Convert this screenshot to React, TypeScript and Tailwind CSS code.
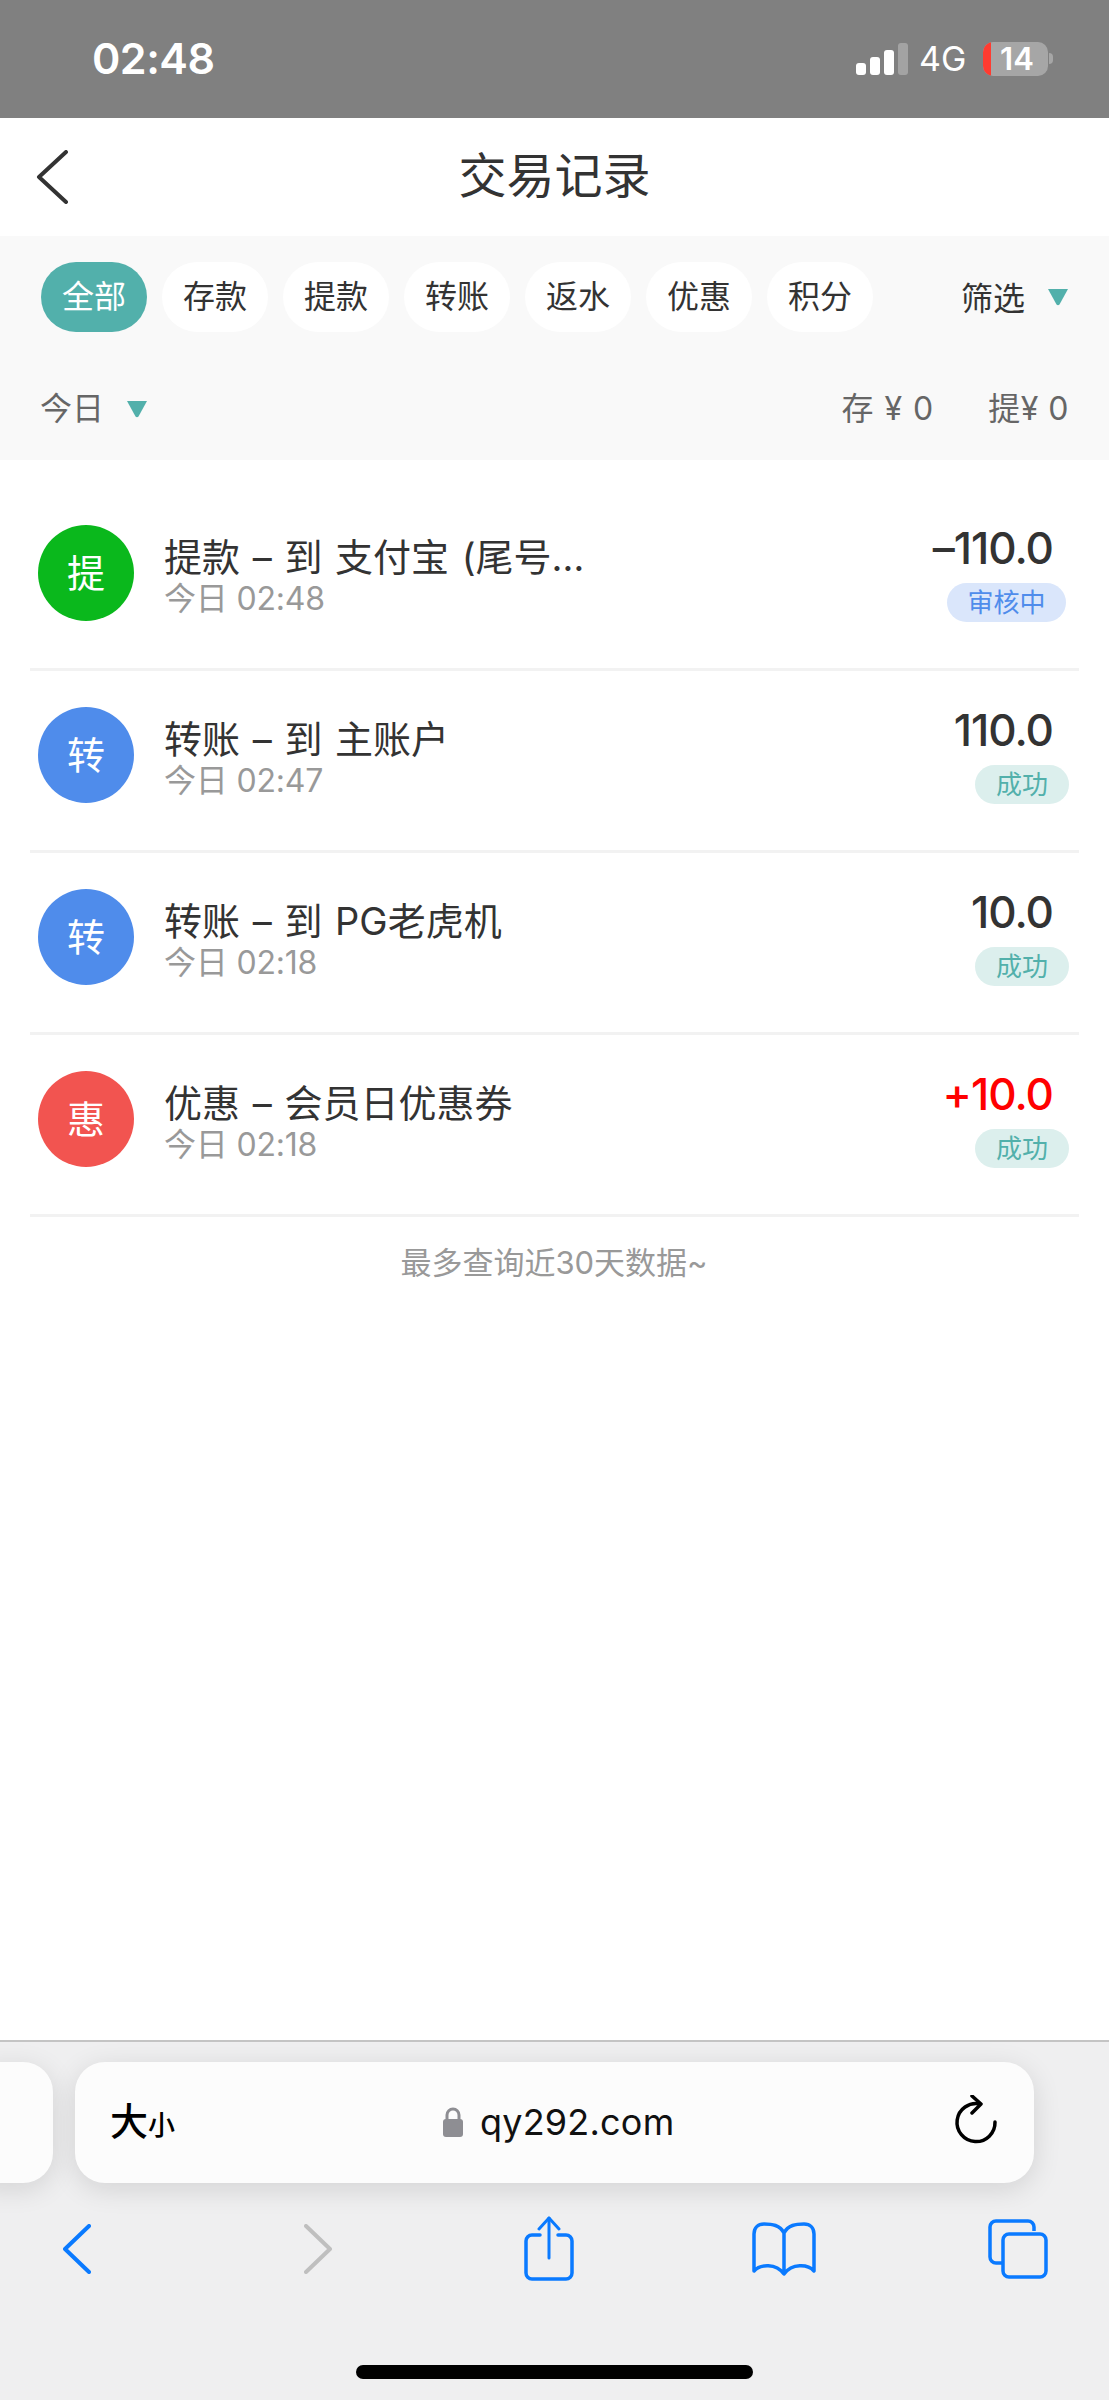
const Tri = ({ className = '' }: { className?: string }) => (
  <svg width="22" height="18" viewBox="0 0 22 18" className={className}>
    <path d="M1 1 H21 L12.5 16.5 Q11 18 9.5 16.5 Z" fill="#52b0ab" />
  </svg>
);

const tabs = ['全部', '存款', '提款', '转账', '返水', '优惠', '积分'];
const rows = [
  { c: 'bg-[#0ab81c]', ch: '提', t: '提款 – 到 支付宝 (尾号…', s: '今日 02:48', a: '–110.0', red: false, b: '审核中' },
  { c: 'bg-[#4f8ceb]', ch: '转', t: '转账 – 到 主账户', s: '今日 02:47', a: '110.0', red: false, b: '成功' },
  { c: 'bg-[#4f8ceb]', ch: '转', t: '转账 – 到 PG老虎机', s: '今日 02:18', a: '10.0', red: false, b: '成功' },
  { c: 'bg-[#f25450]', ch: '惠', t: '优惠 – 会员日优惠券', s: '今日 02:18', a: '+10.0', red: true, b: '成功' },
];

export default function App() {
  return (
    <div className="w-[1109px] h-[2400px] flex flex-col bg-white overflow-hidden font-['Inter','Noto_Sans_CJK_SC',sans-serif] text-[#333]">
      {/* status bar */}
      <div className="h-[118px] shrink-0 bg-[#808080] flex items-center justify-between pl-[92px] pr-[56px] pb-[1px] text-white">
        <span className="text-[43px] font-semibold leading-none tracking-[-0.5px]">02:48</span>
        <div className="flex items-center">
          <svg width="54" height="32" viewBox="0 0 54 32" className="mt-[1px]">
            <rect x="0" y="20" width="10" height="12" rx="3" fill="#fff" />
            <rect x="14" y="14" width="10" height="18" rx="3" fill="#fff" />
            <rect x="28" y="7" width="10" height="25" rx="3" fill="#fff" />
            <rect x="42" y="0" width="10" height="32" rx="3" fill="#a3a3a3" />
          </svg>
          <span className="ml-[9px] text-[34px] leading-none w-[64px]">4G</span>
          <div className="relative w-[65px] h-[34px] rounded-[10px] bg-[#a6a6a6] overflow-hidden flex items-center justify-center pl-[3px]">
            <div className="absolute left-0 top-0 bottom-0 w-[8px] bg-[#ff3b30]" />
            <span className="text-[31px] font-semibold leading-none">14</span>
          </div>
          <div className="w-[4px] h-[11px] rounded-r-full bg-[#a6a6a6] ml-[1px]" />
        </div>
      </div>

      {/* nav */}
      <div className="h-[118px] shrink-0 bg-white relative flex items-center justify-center">
        <svg width="34" height="54" viewBox="0 0 34 54" className="absolute left-[35px] top-[32px]">
          <path d="M31 2 L4 27 L31 52" fill="none" stroke="#333" strokeWidth="4" strokeLinecap="round" strokeLinejoin="round" />
        </svg>
        <span className="text-[48px] leading-none text-[#333] -mt-[3px]">交易记录</span>
      </div>

      {/* filter */}
      <div className="h-[224px] shrink-0 bg-[#f9f9f9] pl-[41px] pr-[40px] pt-[26px]">
        <div className="flex items-center justify-between">
          <div className="flex gap-[15px]">
            {tabs.map((t, i) => (
              <div key={t} className={`w-[106px] h-[70px] rounded-[35px] flex items-center justify-center text-[32px] ${i === 0 ? 'bg-[#52b0ab] text-white' : 'bg-white text-[#333]'}`}>
                {t}
              </div>
            ))}
          </div>
          <div className="flex items-center gap-[22px]">
            <span className="text-[32px] leading-none text-[#333] mt-[3px]">筛选</span>
            <Tri />
          </div>
        </div>
        <div className="flex items-center justify-between mt-[55px] text-[32px] text-[#666] leading-[44px]">
          <div className="flex items-center gap-[22px] -ml-[1px]">
            <span>今日</span>
            <Tri />
          </div>
          <div className="flex items-center gap-[54px]">
            <span className="tracking-[1px]">存 ¥ 0</span>
            <span className="tracking-[0.5px]">提¥ 0</span>
          </div>
        </div>
      </div>

      {/* list */}
      <div className="pt-[29px] px-[30px]">
        {rows.map((r, i) => (
          <div key={i} className="h-[182px] border-b-[3px] border-[#f2f2f2] flex items-start pt-[36px] pl-[8px]">
            <div className={`w-[96px] h-[96px] rounded-full shrink-0 flex items-center justify-center text-white text-[38px] ${r.c}`}>{r.ch}</div>
            <div className="ml-[30px] flex-1 pt-[10px]">
              <div className="text-[38px] leading-[44px] text-[#333] [word-spacing:2px]">{r.t}</div>
              <div className="text-[32px] leading-[40px] text-[#999] tracking-[-0.2px]">{r.s}</div>
            </div>
            <div className="flex flex-col items-end -mt-[2px]">
              <div className={`text-[44px] leading-[50px] font-medium pr-[26px] tracking-[-1px] ${r.red ? 'text-[#ff0000]' : 'text-[#333]'}`}>{r.a}</div>
              <div className={`mt-[10px] h-[39px] rounded-[20px] flex items-center justify-center text-[26px] ${r.b === '成功' ? 'w-[94px] bg-[#dcefed] text-[#52b0ab] mr-[10px]' : 'w-[119px] bg-[#dae6fb] text-[#4f8ceb] mr-[13px]'}`}>{r.b}</div>
            </div>
          </div>
        ))}
        <div className="text-center text-[31px] leading-[44px] text-[#999] mt-[24px] -ml-[1px]">最多查询近30天数据~</div>
      </div>

      <div className="flex-1 bg-white" />

      {/* safari toolbar */}
      <div className="h-[360px] shrink-0 bg-[#efeff0] border-t-[2px] border-[#c4c4c4] relative">
        <div className="pt-[20px] flex gap-[22px] -ml-[30px]">
          <div className="w-[83px] h-[121px] rounded-[30px] bg-[#fcfcfc] shadow-[0_6px_28px_rgba(0,0,0,0.12)] shrink-0" />
          <div className="w-[959px] h-[121px] rounded-[30px] bg-[#fcfcfc] shadow-[0_6px_28px_rgba(0,0,0,0.12)] shrink-0 flex items-center justify-between pl-[35px] pr-[36px] text-black relative">
            <div className="flex items-baseline font-medium leading-none -mt-[3px]">
              <span className="text-[38px]">大</span>
              <span className="text-[27px]">小</span>
            </div>
            <div className="absolute left-[367px] top-0 bottom-0 flex items-center -mt-[2px]">
              <svg width="22" height="30" viewBox="0 0 22 30" className="mr-[16px]">
                <path d="M5 13 V8 a6 6 0 0 1 12 0 V13" fill="none" stroke="#8e8e93" strokeWidth="3" />
                <rect x="1" y="12" width="20" height="18" rx="3" fill="#8e8e93" />
              </svg>
              <span className="text-[36px] leading-none text-[#111] tracking-[0.2px]">qy292.com</span>
            </div>
            <svg width="44" height="50" viewBox="0 0 44 50" className="mt-[-5px]">
              <path d="M26 9 A19 19 0 1 0 41 27" fill="none" stroke="#000" strokeWidth="3.5" strokeLinecap="round" />
              <path d="M18 1 L27 9 L18 18" fill="none" stroke="#000" strokeWidth="3.5" strokeLinecap="round" strokeLinejoin="round" />
            </svg>
          </div>
        </div>

        <div className="mt-[33px] relative h-[66px] flex items-center pl-[63px]">
          <svg width="28" height="50" viewBox="0 0 28 50" className="shrink-0">
            <path d="M26 2 L2 25 L26 48" fill="none" stroke="#0a7aff" strokeWidth="4" strokeLinecap="round" strokeLinejoin="round" />
          </svg>
          <svg width="28" height="50" viewBox="0 0 28 50" className="ml-[213px] shrink-0">
            <path d="M2 2 L26 25 L2 48" fill="none" stroke="#bfbfbf" strokeWidth="4" strokeLinecap="round" strokeLinejoin="round" />
          </svg>
          <svg width="50" height="66" viewBox="0 0 50 66" className="ml-[192px] shrink-0">
            <path d="M16 19 H8 a6 6 0 0 0 -6 6 V57 a6 6 0 0 0 6 6 H42 a6 6 0 0 0 6 -6 V25 a6 6 0 0 0 -6 -6 H34" fill="none" stroke="#0a7aff" strokeWidth="3.5" strokeLinecap="round" />
            <path d="M25 2 V42" fill="none" stroke="#0a7aff" strokeWidth="3" strokeLinecap="round" />
            <path d="M15 13 L25 2 L35 13" fill="none" stroke="#0a7aff" strokeWidth="3" strokeLinecap="round" strokeLinejoin="round" />
          </svg>
          <svg width="64" height="54" viewBox="0 0 64 54" className="ml-[178px] shrink-0">
            <path d="M32 11 C28 3 20 2 12 2 C6 2 2 6 2 12 V49 C8 42 24 41 32 52 C40 41 56 42 62 49 V12 C62 6 58 2 52 2 C44 2 36 3 32 11 V50" fill="none" stroke="#0a7aff" strokeWidth="3.5" strokeLinejoin="round" />
          </svg>
          <svg width="60" height="60" viewBox="0 0 60 60" className="ml-[172px] shrink-0">
            <path d="M46 12 V8 a6 6 0 0 0 -6 -6 H8 a6 6 0 0 0 -6 6 V38 a6 6 0 0 0 6 6 H14" fill="none" stroke="#0a7aff" strokeWidth="3.5" />
            <rect x="15" y="15" width="43" height="43" rx="6" fill="none" stroke="#0a7aff" strokeWidth="3.5" />
          </svg>
        </div>

        <div className="absolute left-[356px] top-[323px] w-[397px] h-[14px] rounded-full bg-black" />
      </div>
    </div>
  );
}
